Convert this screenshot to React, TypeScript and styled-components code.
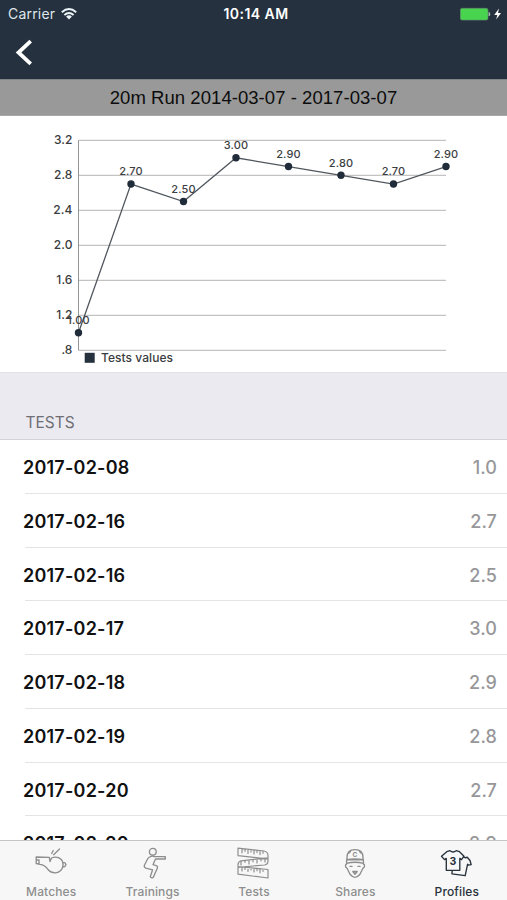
import React from "react";
import styled, { createGlobalStyle } from "styled-components";

const GlobalStyle = createGlobalStyle`
  * { box-sizing: border-box; }
  body { margin: 0; background: #fff; font-family: Inter, "Liberation Sans", sans-serif; }
`;

const Screen = styled.div`
  display: flex;
  flex-direction: column;
  height: 900px;
  overflow: hidden;
`;

const StatusBar = styled.div`
  display: grid;
  grid-template-columns: 1fr auto 1fr;
  align-items: center;
  height: 27px;
  flex: none;
  padding: 0 5px 0 8px;
  background: #25313e;
  color: #fff;
`;

const Carrier = styled.div`
  display: flex;
  align-items: center;
  gap: 6px;
  font-size: 14px;
  line-height: 27px;
  letter-spacing: 0.2px;
  color: #dfe6ec;
`;

const Clock = styled.div`
  font-size: 14px;
  font-weight: 600;
  letter-spacing: 0.45px;
  padding-left: 2px;
`;

const Battery = styled.div`
  display: flex;
  justify-content: flex-end;
`;

const NavBar = styled.div`
  display: flex;
  flex: none;
  height: 52px;
  padding: 12px 0 0 15px;
  background: #25313e;
`;

const TitleBar = styled.h1`
  flex: none;
  margin: 0;
  height: 37px;
  border-top: 1px solid #818589;
  border-bottom: 1px solid #a8a8a8;
  background: #999;
  color: #0c0c0c;
  font: 400 18.5px/36px "Liberation Sans", Arial, sans-serif;
  letter-spacing: 0.05px;
  text-align: center;
`;

const ChartPanel = styled.div`
  flex: none;
  height: 256px;
  overflow: hidden;
  background: #fff;
`;

const ChartSvg = styled.svg`
  display: block;
  font-family: Inter, sans-serif;
`;

const AxisLabel = styled.text`
  font-size: 12px;
  font-weight: 500;
  letter-spacing: 0.1px;
  fill: #3a3c40;
  text-anchor: end;
`;

const ValueLabel = styled.text`
  font-size: 11px;
  font-weight: 500;
  letter-spacing: 0.15px;
  fill: #3c3e42;
  text-anchor: middle;
`;

const LegendLabel = styled.text`
  font-size: 12px;
  font-weight: 500;
  letter-spacing: 0.05px;
  fill: #3a3c40;
`;

const SectionHeader = styled.div`
  flex: none;
  height: 68px;
  padding: 39px 0 0 25.5px;
  background: #ebeaf0;
  border-top: 1px solid #e3e3e7;
  border-bottom: 1px solid #d3d3d8;
  color: #6e6e74;
  font-size: 15.5px;
  line-height: 21px;
`;

const List = styled.div`
  flex: 1;
  min-height: 0;
  overflow: hidden;
  background: #fff;
`;

const Row = styled.div`
  display: flex;
  justify-content: space-between;
  height: 53.75px;
  margin-left: 25px;
  padding-right: 10px;
  border-bottom: 1px solid #e4e4e6;
  line-height: 55px;
`;

const RowDate = styled.span`
  margin-left: -2px;
  color: #111;
  font-size: 18px;
  font-weight: 600;
  letter-spacing: 0.22px;
`;

const RowValue = styled.span`
  color: #97979a;
  font-size: 18px;
  font-weight: 500;
  letter-spacing: 0.1px;
`;

const TabBar = styled.nav`
  flex: none;
  display: grid;
  grid-template-columns: repeat(5, 1fr);
  height: 60px;
  border-top: 1px solid #c5c5c7;
  background: #f7f7f7;
`;

const Tab = styled.div<{ $active?: boolean }>`
  display: flex;
  flex-direction: column;
  align-items: center;
  padding-top: 4px;
  color: ${(p) => (p.$active ? "#27313b" : "#8e8e8e")};
`;

const TabLabel = styled.span`
  margin-top: 2px;
  padding-left: 1px;
  font-size: 12px;
  font-weight: 500;
  line-height: 18px;
  letter-spacing: 0.12px;
`;

const TabIcon = styled.svg`
  display: block;
  width: 36px;
  height: 36px;
  fill: none;
  stroke: currentColor;
  stroke-width: 1.35;
  stroke-linecap: round;
  stroke-linejoin: round;
`;

const JerseyNumber = styled.text`
  font: 700 10.5px Inter, sans-serif;
  fill: currentColor;
  stroke: none;
  text-anchor: middle;
`;

const CapLetter = styled(JerseyNumber)`
  font-size: 6.5px;
`;

const tests = [
  { date: "2017-02-08", value: 1.0 },
  { date: "2017-02-16", value: 2.7 },
  { date: "2017-02-16", value: 2.5 },
  { date: "2017-02-17", value: 3.0 },
  { date: "2017-02-18", value: 2.9 },
  { date: "2017-02-19", value: 2.8 },
  { date: "2017-02-20", value: 2.7 },
  { date: "2017-02-20", value: 2.9 },
];

const ticks = ["3.2", "2.8", "2.4", "2.0", "1.6", "1.2", ".8"];
const LEFT = 78.5;
const RIGHT = 446;
const TOP = 24.3;
const STEP = 35;

function Chart() {
  const points = tests.map((t, i) => ({
    x: LEFT + (i * (RIGHT - LEFT)) / (tests.length - 1),
    y: TOP + ((3.2 - t.value) / 0.4) * STEP,
    label: t.value.toFixed(2),
  }));
  return (
    <ChartSvg width="507" height="257" viewBox="0 0 507 257">
      {ticks.map((tick, i) => (
        <g key={tick}>
          <line x1={LEFT} x2={RIGHT} y1={TOP + i * STEP} y2={TOP + i * STEP} stroke="#b4b5b6" />
          <AxisLabel x="72.5" y={TOP + i * STEP + 3.5}>{tick}</AxisLabel>
        </g>
      ))}
      <line x1={LEFT} x2={LEFT} y1={TOP} y2={TOP + 6 * STEP} stroke="#929495" />
      <polyline
        points={points.map((p) => `${p.x},${p.y}`).join(" ")}
        fill="none"
        stroke="#50575e"
        strokeWidth="1.3"
      />
      {points.map((p) => (
        <g key={p.x}>
          <circle cx={p.x} cy={p.y} r="3.7" fill="#202c3a" />
          <ValueLabel x={p.x} y={p.y - 8.6}>{p.label}</ValueLabel>
        </g>
      ))}
      <rect x="84.7" y="236.8" width="10" height="10" fill="#25313c" />
      <LegendLabel x="101" y="246.4">Tests values</LegendLabel>
    </ChartSvg>
  );
}

const Whistle = () => (
  <TabIcon viewBox="0 0 36 36">
    <path d="M3.2 12 16.3 12.3 17 16.5 18.5 13Q22 11.5 25.5 12.7Q30.5 15 30 20.5Q29 27.2 22.5 27.8Q17.5 27.8 15 24.5Q12 20 7 19.3L3.2 18.5ZM3.2 15H6V19M30 17.3 32 17.8 33 19.7 31.8 21.6 29.7 22.1M18.7 8.5 20.2 5.5M20.7 9.7 26.5 4" />
  </TabIcon>
);

const Athlete = () => (
  <TabIcon viewBox="0 0 36 36">
    <circle cx="18.8" cy="6.8" r="3.4" />
    <path d="M16 11.8Q18 10.7 20.5 11.6H31.3V14H21.5L19 19.7 22.8 20.8Q24.1 21.5 23.3 23.3L19.3 32.2Q17.5 33.8 16.3 31.6L18.6 24.8 11.8 23.1Q9.8 22.3 10.4 20.3L13.7 13.8Q14.5 12.3 16 11.8Z" />
  </TabIcon>
);

const Tape = () => (
  <TabIcon viewBox="0 0 36 36">
    <path
      strokeWidth="1.2"
      d="M3 3.2 29 6Q33 6.8 33 10.5V14L3 10.7ZM33 12.8 6 15.8Q3 16.8 3 20V29.2L33 33V24.5L3 21.5M3 22.3 29.5 20Q33 19.5 33 16V13M7 3.8V7.8M10 4.1V6.3M13 4.4V8.4M16 4.8V7.1M19 5V9M22 5.3V7.6M25 5.6V9.6M28 5.9V8.3M6 16V19.9M10 15.4V17.3M14 15V19M18 14.5V16.8M22 14.1V18M26 13.6V15.8M30 13.3V17M7 22V26M10 22.3V24.5M13 22.6V26.5M16 22.8V25M19 23.1V27M22 23.4V25.7M25 23.7V27.7M28 24V26.3"
    />
  </TabIcon>
);

const Face = () => (
  <TabIcon viewBox="0 0 36 36">
    <path d="M10 14.7V12.3Q10 4.6 18 4.6T26 12.3V14.7ZM9.6 14.7Q18 13 26.4 14.7V18.3Q18 16.3 9.6 18.3ZM9.6 19Q8 19.3 8.7 22L10.2 23.5 13 29.3Q18 35.3 23 29.3L25.8 23.5 27.3 22Q28 19.3 26.4 19M13 21.4H15M21 21.4H23M15.8 26.5H20.2L18 29.2ZM16.5 26.9H19.5M12 8 13.5 6.5M24 8 22.5 6.5" />
    <CapLetter x="18" y="12.2">C</CapLetter>
  </TabIcon>
);

const Jerseys = () => (
  <TabIcon viewBox="0 0 36 36">
    <path d="M8.8 6.7 12 5.7Q15 8.2 18.2 5.7L21.5 6.7 26 11.2 23.5 14.6 21.8 13.4V25.3H8.3V13.4L6.5 14.6 3.5 11.2Z" />
    <path d="M25.5 11.8Q27 13.4 29.2 12.2L32 15.5 33.2 19.7 30.3 20.2 29.6 19.2 27.2 30.7 13.9 28.9 14.2 26" />
    <JerseyNumber x="15" y="19.7">3</JerseyNumber>
  </TabIcon>
);

const tabs = [
  { label: "Matches", Icon: Whistle },
  { label: "Trainings", Icon: Athlete },
  { label: "Tests", Icon: Tape },
  { label: "Shares", Icon: Face },
  { label: "Profiles", Icon: Jerseys, active: true },
];

export default function App() {
  return (
    <Screen>
      <GlobalStyle />
      <StatusBar>
        <Carrier>
          Carrier
          <svg width="16" height="12" viewBox="0 0 16 12" fill="none" stroke="#edf4f8" strokeWidth="1.9">
            <path d="M.8 4.2Q8-2.2 15.2 4.2M3.4 7Q8 3 12.6 7" />
            <path d="M5.1 8.4Q8 6.1 10.9 8.4L8 11.4Z" fill="#edf4f8" stroke="none" />
          </svg>
        </Carrier>
        <Clock>10:14 AM</Clock>
        <Battery>
          <svg width="42" height="14" viewBox="0 0 42 14">
            <rect x="0.3" y="1.3" width="27.7" height="11.8" rx="1.8" fill="#48d44f" stroke="#64886e" strokeWidth=".6" />
            <path d="M29 5.3Q31 7.2 29 9Z" fill="#aec1bb" stroke="#aec1bb" strokeWidth=".7" />
            <path d="M39 1.5 34.2 8H37.3L36.2 12.5 41 6H38Z" fill="#fff" />
          </svg>
        </Battery>
      </StatusBar>
      <NavBar>
        <svg width="18" height="28" viewBox="0 0 18 28" fill="none" stroke="#fff" strokeWidth="3.8">
          <path d="M15.7 2.2 3.5 13.5 15.7 24.8" />
        </svg>
      </NavBar>
      <TitleBar>20m Run 2014-03-07 - 2017-03-07</TitleBar>
      <ChartPanel>
        <Chart />
      </ChartPanel>
      <SectionHeader>TESTS</SectionHeader>
      <List>
        {tests.map((t, i) => (
          <Row key={i}>
            <RowDate>{t.date}</RowDate>
            <RowValue>{t.value.toFixed(1)}</RowValue>
          </Row>
        ))}
      </List>
      <TabBar>
        {tabs.map(({ label, Icon, active }) => (
          <Tab key={label} $active={active}>
            <Icon />
            <TabLabel>{label}</TabLabel>
          </Tab>
        ))}
      </TabBar>
    </Screen>
  );
}
